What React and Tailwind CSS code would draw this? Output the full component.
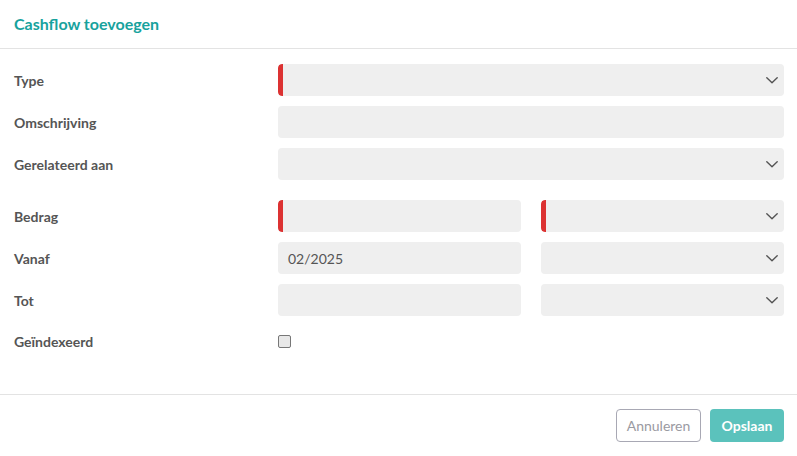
import React from "react";

const Chevron = () => (
  <svg width="12" height="7" viewBox="0 0 12 7" fill="none" className="shrink-0">
    <path d="M0.8 0.8 L6 5.8 L11.2 0.8" stroke="#555" strokeWidth="1.4" strokeLinecap="round" strokeLinejoin="round" />
  </svg>
);

const Field = ({ required = false, select = false, value = "" }) => (
  <div className="relative h-8 flex-1 rounded bg-[#efefef] flex items-center pl-[10px] pr-[6px] overflow-hidden">
    {required && <div className="absolute left-0 top-0 bottom-0 w-[5px] bg-[#dc3232] rounded-l" />}
    <span className="flex-1 text-[14px] text-[#555]">{value}</span>
    {select && <Chevron />}
  </div>
);

const Row = ({ label, children, className = "" }) => (
  <div className={`flex items-center ${className}`}>
    <div className="w-[264px] shrink-0 pt-[2px] text-[14px] leading-5 font-bold text-[#555]">{label}</div>
    <div className="flex flex-1 gap-5">{children}</div>
  </div>
);

export default function App() {
  return (
    <div className="w-[797px] h-[456px] bg-white flex flex-col" style={{ fontFamily: "Lato, 'Open Sans', sans-serif" }}>
      <div className="h-[49px] border-b border-[#e3e3e3] flex items-center px-[14px]">
        <h1 className="text-[16px] font-bold text-[#17a29d]">Cashflow toevoegen</h1>
      </div>
      <div className="flex-1 pt-[15px] pl-[14px] pr-[13px] flex flex-col">
        <div className="flex flex-col gap-[10px]">
          <Row label="Type"><Field required select /></Row>
          <Row label="Omschrijving"><Field /></Row>
          <Row label="Gerelateerd aan"><Field select /></Row>
        </div>
        <div className="flex flex-col gap-[10px] mt-[20px]">
          <Row label="Bedrag">
            <Field required />
            <Field required select />
          </Row>
          <Row label="Vanaf">
            <Field value="02/2025" />
            <Field select />
          </Row>
          <Row label="Tot">
            <Field />
            <Field select />
          </Row>
          <Row label="Geïndexeerd" className="h-[30px]">
            <div className="w-[13px] h-[13px] border border-[#777] bg-[#e8e8e8] rounded-[2px]" />
          </Row>
        </div>
      </div>
      <div className="h-[62px] border-t border-[#e3e3e3] flex items-center justify-end gap-[9px] pr-[13px]">
        <button className="h-[33px] w-[85px] rounded border border-[#a8a8b4] text-[14px] text-[#9a9aa2] bg-white">Annuleren</button>
        <button className="h-[33px] w-[74px] rounded bg-[#5bc2bc] text-[14px] font-bold text-white">Opslaan</button>
      </div>
    </div>
  );
}
